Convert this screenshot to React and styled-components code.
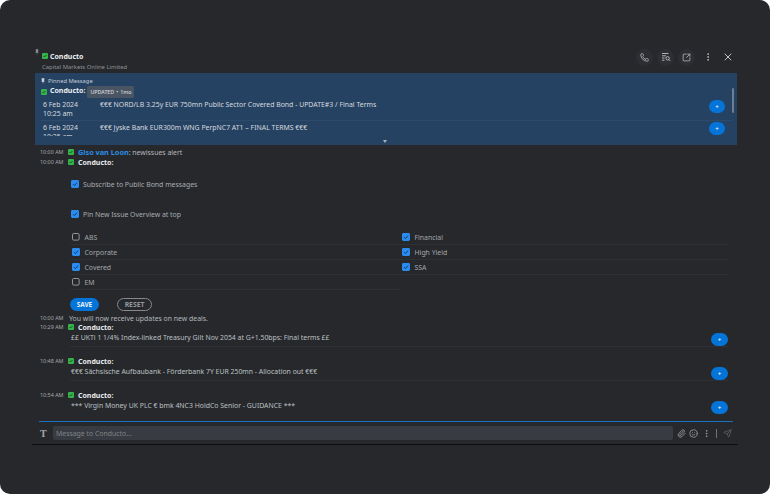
import React from 'react';
import styled, { createGlobalStyle } from 'styled-components';
import { Phone, SquareArrowOutUpRight, EllipsisVertical, X, Paperclip, Smile, Send } from 'lucide-react';

const Global = createGlobalStyle`
  html, body { margin: 0; background: #fff; }
  * { box-sizing: border-box; }
`;

const Window = styled.div`
  width: 770px;
  height: 494px;
  overflow: hidden;
  padding: 46px 32px 0;
  background: #26282c;
  border-radius: 10px;
  font-family: 'Noto Sans', sans-serif;
  font-size: 6.9px;
  color: #b9bcc0;
`;

const Header = styled.header`
  position: relative;
  height: 27px;
  display: flex;
  justify-content: space-between;
  padding: 4px 0 0 10px;
`;

const HeaderPin = styled.span`
  position: absolute;
  left: 3px;
  top: 3px;
  line-height: 0;
`;

const HeaderTitle = styled.div`
  display: flex;
  flex-direction: column;
`;

const TitleRow = styled.div`
  display: flex;
  align-items: center;
  gap: 2px;
  height: 12px;
`;

const Name = styled.span`
  font-weight: 700;
  font-size: 7px;
  color: #eceef0;
`;

const PinnedName = styled(Name)`
  margin-top: -3px;
`;

const Subtitle = styled.div`
  margin-top: 0.5px;
  font-size: 5.9px;
  color: #8f9297;
`;

const Actions = styled.div`
  display: flex;
  align-items: center;
  height: 20px;
  margin-top: -3px;
  padding-right: 2px;
`;

const RoundAction = styled.button`
  width: 17px;
  height: 17px;
  margin-right: 4px;
  padding: 0;
  display: flex;
  align-items: center;
  justify-content: center;
  border: 0;
  border-radius: 50%;
  background: #2c2e33;
  color: #c0c2c5;
`;

const PlainAction = styled(RoundAction)`
  background: transparent;
  margin-left: ${(p) => p.$left || 0}px;
  margin-right: 0;
`;

const Pinned = styled.section`
  position: relative;
  height: 72px;
  margin-left: 3px;
  margin-right: 1px;
  padding: 4px 5px 0 6px;
  background: #264263;
  overflow: hidden;
`;

const PinnedLabel = styled.div`
  display: flex;
  align-items: center;
  gap: 3px;
  height: 8px;
  font-size: 5.8px;
  color: #c2cad4;
`;

const PinnedTitle = styled.div`
  display: flex;
  align-items: center;
  height: 13px;
  gap: 3px;
`;

const Tag = styled.span`
  margin-left: -1px;
  padding: 0 3px;
  height: 12px;
  line-height: 12px;
  font-size: 5.3px;
  font-weight: 500;
  word-spacing: 0.6px;
  border-radius: 1.5px;
  background: #4a5563;
  color: #d6d9dd;
`;

const PinnedRow = styled.div`
  display: grid;
  grid-template-columns: 57px 1fr 16px;
  height: ${(p) => p.$h}px;
  padding: 0 8px 0 2px;
  margin-right: -1px;
  line-height: 9px;
  color: #d5d9de;
  overflow: hidden;
  border-bottom: ${(p) => (p.$line ? '1px solid #2d4a6b' : '0')};
`;

const PinnedDate = styled.div`
  padding-top: 2px;
`;

const PinnedText = styled.div`
  padding-top: 2px;
  white-space: nowrap;
`;

const PlusBtn = styled.button`
  width: ${(p) => p.$w || 16}px;
  height: 13px;
  margin-top: ${(p) => p.$top || 0}px;
  padding: 0;
  border: 0;
  border-radius: 7px;
  background: #0474d8;
  color: #e6f0fa;
  font-size: 6px;
  font-weight: 700;
  line-height: 13px;
  text-align: center;
`;

const Scrollbar = styled.div`
  position: absolute;
  top: 15px;
  right: 3px;
  width: 2.5px;
  height: 25px;
  border-radius: 2px;
  background: #6e7d8f;
`;

const Chevron = styled.div`
  position: absolute;
  left: 348px;
  bottom: 2px;
  width: 0;
  height: 0;
  border-left: 2.5px solid transparent;
  border-right: 2.5px solid transparent;
  border-top: 3px solid #aab3bd;
`;

const Feed = styled.main`
  height: 276px;
  padding: 2px 5px 0 8px;
  overflow: hidden;
`;

const MetaRow = styled.div`
  display: flex;
  align-items: center;
  height: ${(p) => p.$h || 10}px;
  white-space: nowrap;
`;

const Time = styled.span`
  width: 28px;
  font-size: 5.4px;
  color: #a6a9ad;
`;

const Sender = styled.span`
  margin-left: 4px;
  font-weight: 700;
  font-size: ${(p) => p.$size || 7}px;
  color: ${(p) => p.$color || '#e8eaec'};
`;

const Form = styled.form`
  margin: 0;
  padding: 10px 0 0 30px;
`;

const CheckRow = styled.label`
  display: flex;
  align-items: center;
  gap: 4px;
  height: 14px;
  margin-bottom: 16px;
  margin-left: 1px;
  color: #a9acb0;
`;

const Options = styled.div`
  display: grid;
  grid-template-columns: 330px 328px;
  margin-top: -7px;
`;

const Option = styled.label`
  display: flex;
  align-items: center;
  gap: 4.5px;
  height: 15px;
  padding-left: 2px;
  border-bottom: 1px solid #2e3035;
  color: #a4a7ab;
`;

const Buttons = styled.div`
  display: flex;
  gap: 18px;
  margin: 8px 0 3px;
`;

const SaveBtn = styled.button`
  width: 29px;
  height: 13px;
  padding: 0;
  border: 0;
  border-radius: 7px;
  background: #0474d8;
  color: #e8f1fa;
  font: 700 6.4px 'Noto Sans', sans-serif;
`;

const ResetBtn = styled.button`
  width: 35px;
  height: 13px;
  padding: 0;
  border: 1.3px solid #85888c;
  border-radius: 7px;
  background: transparent;
  color: #95989c;
  font: 700 6.8px 'Noto Sans', sans-serif;
`;

const Notice = styled.span`
  margin-left: ${(p) => p.$left || 0}px;
  color: #b5b8bb;
`;

const Message = styled.article`
  padding-bottom: 9px;
`;

const MessageBody = styled.div`
  display: flex;
  justify-content: space-between;
  height: 15px;
  margin: 0 5px 0 30px;
  padding: 0 0 0 1px;
  line-height: 12px;
  color: #bdc0c3;
  border-bottom: ${(p) => (p.$last ? '0' : '1px solid #2e3035')};
`;

const Composer = styled.footer`
  height: 24px;
  display: flex;
  align-items: center;
  border-bottom: 1px solid #0c0d0e;
`;

const ComposerInner = styled.div`
  flex: 1;
  display: flex;
  align-items: center;
  height: 23px;
  margin: 0 5px 0 7px;
  border-top: 1px solid #1a70c0;
  color: #8d9094;
`;

const TypeIcon = styled.span`
  width: 14px;
  font: 700 10px 'Liberation Serif', serif;
  color: #a4a7aa;
  padding-left: 1px;
`;

const MessageInput = styled.input`
  width: 620px;
  height: 14px;
  padding: 0 3px;
  border: 0;
  border-radius: 2px;
  background: #383b41;
  color: #8d9094;
  font: 6.9px 'Noto Sans', sans-serif;
  &::placeholder { color: #7f8388; }
`;

const ComposerTools = styled.div`
  display: flex;
  align-items: center;
  gap: 3.5px;
  margin-left: 3.5px;
  color: #a4a7aa;
`;

const Divider = styled.span`
  width: 1px;
  height: 9px;
  margin: 0 2px;
  background: #6d7074;
`;

const Verified = () => (
  <svg width="6" height="6" viewBox="0 0 6 6">
    <rect width="6" height="6" rx="1" fill="#35b34a" />
    <path d="M1.5 3l1 1 2-2" stroke="#143d1c" strokeWidth=".8" fill="none" />
  </svg>
);

const PinIcon = ({ size = 6, color = '#d4d8dd' }) => (
  <svg width={size} height={size + 2} viewBox="0 0 6 8">
    <path d="M1 0h4v1l-.4 2.6L5.6 5H3.3v3h-.6V5H.4l1-1.4L1 1z" fill={color} />
  </svg>
);

const Box = ({ checked, size = 8 }) => (
  <svg width={size} height={size} viewBox="0 0 8 8" style={{ flex: 'none' }}>
    {checked ? (
      <>
        <rect width="8" height="8" rx="1.4" fill="#2a8cf0" />
        <path d="M2 4.2l1.4 1.4L6 2.6" stroke="#123b66" strokeWidth="1" fill="none" />
      </>
    ) : (
      <rect x=".5" y=".5" width="6.6" height="6.6" rx="1.2" fill="none" stroke="#a0a3a7" strokeWidth=".9" />
    )}
  </svg>
);

const SearchList = () => (
  <svg width="10" height="10" viewBox="0 0 10 10" fill="none" stroke="currentColor" strokeWidth=".9">
    <path d="M1 1.5h6.5M1 3.8h4M1 6h2.5M1 8.2h2.5" />
    <circle cx="6.6" cy="6.3" r="1.7" />
    <path d="M7.9 7.6l1.4 1.4" />
  </svg>
);

const pinnedRows = [
  { date: ['6 Feb 2024', '10:25 am'], text: '€€€ NORD/LB 3.25y EUR 750mn Public Sector Covered Bond - UPDATE#3 / Final Terms', h: 23, line: true, top: 2 },
  { date: ['6 Feb 2024', '10:25 am'], text: '€€€ Jyske Bank EUR300m WNG PerpNC7 AT1 – FINAL TERMS €€€', h: 15, top: 1 },
];

const leftOptions = [['ABS', false], ['Corporate', true], ['Covered', true], ['EM', false]];
const rightOptions = [['Financial', true], ['High Yield', true], ['SSA', true]];

const messages = [
  ['10:29 AM', '££ UKTi 1 1/4% Index-linked Treasury Gilt Nov 2054 at G+1.50bps: Final terms ££'],
  ['10:48 AM', '€€€ Sächsische Aufbaubank - Förderbank 7Y EUR 250mn - Allocation out €€€'],
  ['10:54 AM', '*** Virgin Money UK PLC € bmk 4NC3 HoldCo Senior - GUIDANCE ***'],
];

export default function App() {
  return (
    <Window>
      <Global />
      <Header>
        <HeaderPin><PinIcon size={4} color="#8a8d91" /></HeaderPin>
        <HeaderTitle>
          <TitleRow>
            <Verified />
            <Name>Conducto</Name>
          </TitleRow>
          <Subtitle>Capital Markets Online Limited</Subtitle>
        </HeaderTitle>
        <Actions>
          <RoundAction><Phone size={9} /></RoundAction>
          <RoundAction><SearchList /></RoundAction>
          <RoundAction><SquareArrowOutUpRight size={9} /></RoundAction>
          <PlainAction><EllipsisVertical size={10} /></PlainAction>
          <PlainAction $left={3}><X size={12} /></PlainAction>
        </Actions>
      </Header>

      <Pinned>
        <PinnedLabel><PinIcon size={4} />Pinned Message</PinnedLabel>
        <PinnedTitle>
          <Verified />
          <PinnedName>Conducto:</PinnedName>
          <Tag>UPDATED • 1mo</Tag>
        </PinnedTitle>
        {pinnedRows.map((row) => (
          <PinnedRow key={row.text} $h={row.h} $line={row.line}>
            <PinnedDate>{row.date[0]}<br />{row.date[1]}</PinnedDate>
            <PinnedText>{row.text}</PinnedText>
            <PlusBtn $top={row.top}>+</PlusBtn>
          </PinnedRow>
        ))}
        <Scrollbar />
        <Chevron />
      </Pinned>

      <Feed>
        <MetaRow>
          <Time>10:00 AM</Time>
          <Verified />
          <Sender $color="#2a8ce6" $size={7.3}>Giso van Loon</Sender>
          <Notice>: newissues alert</Notice>
        </MetaRow>
        <MetaRow>
          <Time>10:00 AM</Time>
          <Verified />
          <Sender>Conducto:</Sender>
        </MetaRow>

        <Form>
          <CheckRow><Box checked />Subscribe to Public Bond messages</CheckRow>
          <CheckRow><Box checked />Pin New Issue Overview at top</CheckRow>
          <Options>
            <div>
              {leftOptions.map(([label, checked]) => (
                <Option key={label}><Box checked={checked} />{label}</Option>
              ))}
            </div>
            <div>
              {rightOptions.map(([label, checked]) => (
                <Option key={label}><Box checked={checked} />{label}</Option>
              ))}
            </div>
          </Options>
          <Buttons>
            <SaveBtn type="button">SAVE</SaveBtn>
            <ResetBtn type="button">RESET</ResetBtn>
          </Buttons>
        </Form>

        <MetaRow $h={8}>
          <Time>10:00 AM</Time>
          <Notice $left={1}>You will now receive updates on new deals.</Notice>
        </MetaRow>

        {messages.map(([time, text], i) => (
          <Message key={time}>
            <MetaRow>
              <Time>{time}</Time>
              <Verified />
              <Sender>Conducto:</Sender>
            </MetaRow>
            <MessageBody $last={i === messages.length - 1}>
              {text}
              <PlusBtn $w={17} $top={1}>+</PlusBtn>
            </MessageBody>
          </Message>
        ))}
      </Feed>

      <Composer>
        <ComposerInner>
          <TypeIcon>T</TypeIcon>
          <MessageInput placeholder="Message to Conducto..." readOnly />
          <ComposerTools>
            <Paperclip size={9} />
            <Smile size={9} />
            <EllipsisVertical size={9} />
            <Divider />
            <Send size={9} color="#5f6266" />
          </ComposerTools>
        </ComposerInner>
      </Composer>
    </Window>
  );
}
